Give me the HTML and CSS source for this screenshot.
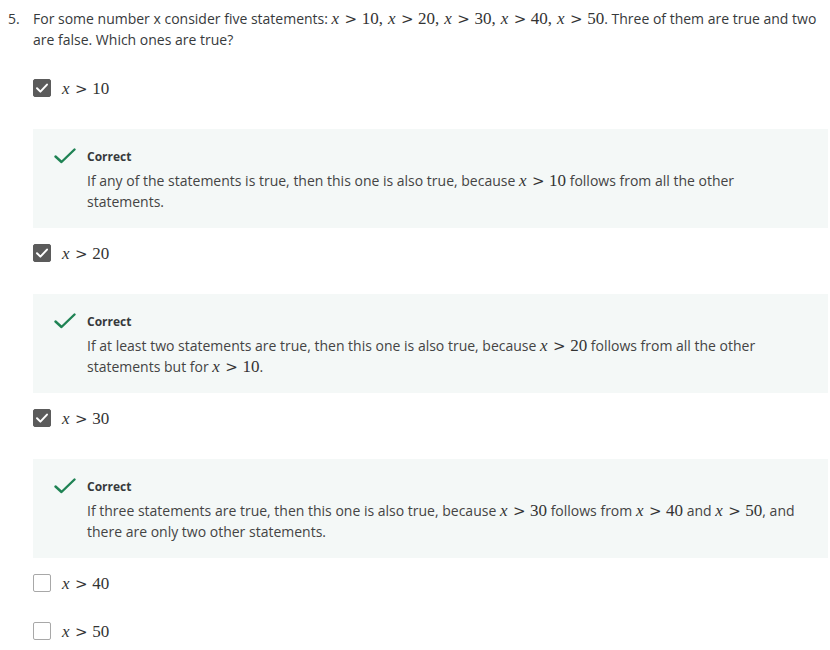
FILE: index.html
```html
<!DOCTYPE html>
<html>
<head>
<meta charset="utf-8">
<link rel="stylesheet" href="styles.css">
</head>
<body>
<div class="question">
  <div class="qnum">5.</div>
  <div class="qtext">For some number x consider five statements: <span class="math"><i>x</i><span class="rel">&gt;</span>10,<span class="thin"></span><i>x</i><span class="rel">&gt;</span>20,<span class="thin"></span><i>x</i><span class="rel">&gt;</span>30,<span class="thin"></span><i>x</i><span class="rel">&gt;</span>40,<span class="thin"></span><i>x</i><span class="rel">&gt;</span>50</span>. Three of them are true and two are false. Which ones are true?</div>
</div>

<div class="options">
  <div class="option">
    <span class="box checked"><svg width="18" height="18" viewBox="0 0 18 18"><path d="M4 9.2 L7.4 12.6 L14 5.6" fill="none" stroke="#fff" stroke-width="2" stroke-linecap="round" stroke-linejoin="round"/></svg></span>
    <span class="math"><i>x</i><span class="rel">&gt;</span>10</span>
  </div>
  <div class="feedback">
    <div class="ficon"><svg width="22" height="16" viewBox="0 0 22 16"><path d="M1.5 8.5 L7.5 14 L20.5 1.5" fill="none" stroke="#1f8354" stroke-width="2.4" stroke-linecap="round" stroke-linejoin="round"/></svg></div>
    <div class="fbody">
      <div class="ftitle">Correct</div>
      <div class="ftext">If any of the statements is true, then this one is also true, because <span class="math"><i>x</i><span class="rel">&gt;</span>10</span> follows from all the other statements.</div>
    </div>
  </div>

  <div class="option">
    <span class="box checked"><svg width="18" height="18" viewBox="0 0 18 18"><path d="M4 9.2 L7.4 12.6 L14 5.6" fill="none" stroke="#fff" stroke-width="2" stroke-linecap="round" stroke-linejoin="round"/></svg></span>
    <span class="math"><i>x</i><span class="rel">&gt;</span>20</span>
  </div>
  <div class="feedback">
    <div class="ficon"><svg width="22" height="16" viewBox="0 0 22 16"><path d="M1.5 8.5 L7.5 14 L20.5 1.5" fill="none" stroke="#1f8354" stroke-width="2.4" stroke-linecap="round" stroke-linejoin="round"/></svg></div>
    <div class="fbody">
      <div class="ftitle">Correct</div>
      <div class="ftext">If at least two statements are true, then this one is also true, because <span class="math"><i>x</i><span class="rel">&gt;</span>20</span> follows from all the other statements but for <span class="math"><i>x</i><span class="rel">&gt;</span>10</span>.</div>
    </div>
  </div>

  <div class="option">
    <span class="box checked"><svg width="18" height="18" viewBox="0 0 18 18"><path d="M4 9.2 L7.4 12.6 L14 5.6" fill="none" stroke="#fff" stroke-width="2" stroke-linecap="round" stroke-linejoin="round"/></svg></span>
    <span class="math"><i>x</i><span class="rel">&gt;</span>30</span>
  </div>
  <div class="feedback">
    <div class="ficon"><svg width="22" height="16" viewBox="0 0 22 16"><path d="M1.5 8.5 L7.5 14 L20.5 1.5" fill="none" stroke="#1f8354" stroke-width="2.4" stroke-linecap="round" stroke-linejoin="round"/></svg></div>
    <div class="fbody">
      <div class="ftitle">Correct</div>
      <div class="ftext">If three statements are true, then this one is also true, because <span class="math"><i>x</i><span class="rel">&gt;</span>30</span> follows from <span class="math"><i>x</i><span class="rel">&gt;</span>40</span> and <span class="math"><i>x</i><span class="rel">&gt;</span>50</span>, and there are only two other statements.</div>
    </div>
  </div>

  <div class="option">
    <span class="box"></span>
    <span class="math"><i>x</i><span class="rel">&gt;</span>40</span>
  </div>
  <div class="option">
    <span class="box"></span>
    <span class="math"><i>x</i><span class="rel">&gt;</span>50</span>
  </div>
</div>
</body>
</html>
```

FILE: styles.css
```css
html, body {
  margin: 0;
  padding: 0;
  background: #fff;
}
body {
  font-family: "Open Sans", "Noto Sans", sans-serif;
  font-size: 14px;
  color: #373a3c;
  padding: 8px 0 0 8px;
  overflow: hidden;
}
.question {
  display: flex;
  line-height: 21px;
}
.qnum {
  width: 25px;
  flex: none;
}
.qtext {
  flex: 1;
}
.math {
  font-family: "Liberation Serif", "DejaVu Serif", serif;
  font-size: 17px;
  line-height: 1;
  white-space: nowrap;
  color: #333;
}
.math i {
  font-style: italic;
  padding-right: 1px;
}
.rel {
  font-family: "DejaVu Serif", "Liberation Serif", serif;
  font-size: 15px;
  margin: 0 4.5px;
}
.thin {
  display: inline-block;
  width: 5px;
}
.options {
  display: flex;
  flex-direction: column;
  margin: 22px 0 0 25px;
}
.option {
  display: flex;
  align-items: center;
  height: 32px;
  gap: 11px;
  margin-bottom: 16px;
}
.box {
  width: 18px;
  height: 18px;
  box-sizing: border-box;
  border: 1px solid #a8a8a8;
  border-radius: 2px;
  background: #fff;
  display: flex;
  align-items: center;
  justify-content: center;
}
.box.checked {
  background: #5b5b5b;
  border-color: #5b5b5b;
}
.box svg {
  flex: none;
}
.feedback {
  display: flex;
  background: #f4f8f7;
  margin: 9px 2px 9px 0;
  padding: 19px 20px 16px 21px;
}
.ficon {
  width: 33px;
  flex: none;
}
.ficon svg {
  display: block;
}
.fbody {
  flex: 1;
}
.ftitle {
  font-size: 12px;
  font-weight: 700;
  line-height: 18px;
  color: #373a3c;
  margin-bottom: 4px;
}
.ftext {
  line-height: 21px;
  color: #444;
}
```
